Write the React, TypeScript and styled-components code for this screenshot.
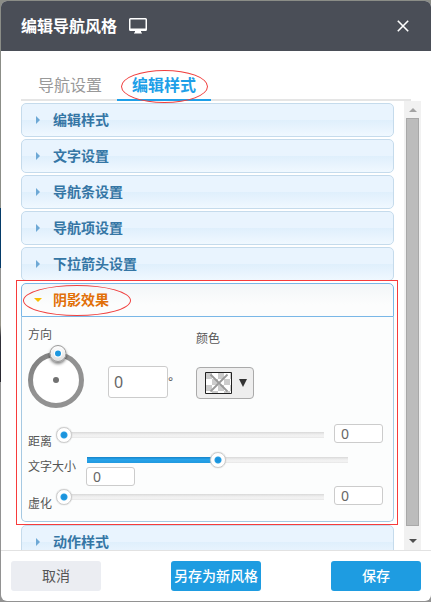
import React, { useState } from "react";
import styled, { createGlobalStyle } from "styled-components";

const GlobalStyle = createGlobalStyle`
  *, *::before, *::after { box-sizing: border-box; }
  body {
    margin: 0;
    font-family: "Noto Sans", "Noto Sans CJK SC", sans-serif;
    font-size: 12px;
    color: #666;
  }
  button, input { font-family: inherit; }
`;

const Backdrop = styled.div`
  height: 100vh;
  padding: 1px 0 1px 1px;
  background: linear-gradient(
    to bottom,
    #8b8d87 0 34.5%,
    #053b69 34.5% 44.5%,
    #929292 44.5%,
    #969488 54%,
    #33323a 56%,
    #28272f 63.5%,
    #929292 63.5%
  );
`;

const Dialog = styled.section`
  display: flex;
  flex-direction: column;
  height: 100%;
  overflow: hidden;
  background: #fff;
  border-radius: 6px;
`;

const TitleBar = styled.header`
  display: flex;
  align-items: center;
  gap: 12px;
  height: 50px;
  flex: none;
  padding: 0 16px 0 20px;
  background: #4a4e57;
  color: #fff;
`;

const Title = styled.h1`
  margin: 0;
  font-size: 16px;
  line-height: 24px;
  font-weight: 700;
`;

const CloseButton = styled.button`
  display: flex;
  align-items: center;
  justify-content: center;
  width: 24px;
  height: 24px;
  margin-left: auto;
  padding: 0;
  border: 0;
  background: none;
  color: #fff;
  cursor: pointer;
`;

const TabList = styled.div`
  display: flex;
  flex: none;
  height: 50px;
  margin: 0 20px;
  padding-left: 2px;
  box-shadow: inset 0 -2px #e5e5e5;
`;

const Tab = styled.button<{ $active?: boolean }>`
  position: relative;
  padding: 20px 15px 0;
  border: 0;
  border-bottom: 2px solid ${(p) => (p.$active ? "#1e9fe8" : "transparent")};
  background: none;
  color: ${(p) => (p.$active ? "#1e9fe8" : "#999")};
  font-size: 16px;
  line-height: 24px;
  font-weight: ${(p) => (p.$active ? 700 : 400)};
  cursor: pointer;
`;

const TabMark = styled.span`
  position: absolute;
  inset: 19px 3px -4px 4px;
  border: 1px solid #f0403f;
  border-radius: 50%;
`;

const ScrollArea = styled.div`
  display: flex;
  flex: 1;
  gap: 10px;
  min-height: 0;
  padding: 0 10px 0 20px;
`;

const Viewport = styled.div`
  flex: 1;
  min-width: 0;
  padding: 2px 4px 0 5px;
  margin: 0 -4px 0 -5px;
  overflow: hidden;
`;

const Section = styled.section`
  margin-bottom: 2px;
`;

const OpenSection = styled(Section)`
  position: relative;
  margin-bottom: 3px;
`;

const SectionMark = styled.div`
  position: absolute;
  inset: -3px -4px -3px -5px;
  border: 1px solid #f73b3b;
  pointer-events: none;
`;

const HeadingMark = styled.span`
  position: absolute;
  top: 1px;
  left: 1px;
  width: 108px;
  height: 31px;
  border: 1px solid #f0403f;
  border-radius: 50%;
`;

const SectionHeading = styled.h2`
  margin: 0;
  font-size: 14px;
`;

const SectionButton = styled.button<{ $open?: boolean }>`
  position: relative;
  display: flex;
  align-items: center;
  gap: 9px;
  width: 100%;
  height: 34px;
  padding: 0 11px 0 10px;
  border: 1px solid ${(p) => (p.$open ? "#79b7e7" : "#c5dbec")};
  border-radius: ${(p) => (p.$open ? "5px 5px 0 0" : "5px")};
  background: ${(p) =>
    p.$open
      ? "linear-gradient(#f3f6f8, #fcfdfd 65%)"
      : "linear-gradient(#e9f4fe 50%, #dfeffc 50%, #f0f8ff)"};
  color: ${(p) => (p.$open ? "#e17009" : "#3576a5")};
  font-size: 14px;
  line-height: 20px;
  font-weight: 700;
  text-align: left;
  cursor: pointer;
`;

const Panel = styled.div`
  padding: 8px 10px 8px 6px;
  border: 1px solid #a6c9e2;
  border-top: 0;
  border-radius: 0 0 5px 5px;
  background: #fcfdfd;
`;

const ShadowOptions = styled.div`
  display: grid;
  grid-template-columns: 168px 1fr;
  margin-bottom: 16px;
`;

const DirectionField = styled.div`
  display: flex;
  flex-direction: column;
  gap: 7px;
`;

const ColorField = styled.div`
  display: flex;
  flex-direction: column;
  align-items: flex-start;
  gap: 18px;
  padding-top: 4px;
`;

const Label = styled.label`
  flex: none;
  font-size: 12px;
  line-height: 20px;
  color: #555;
`;

const DialRow = styled.div`
  display: flex;
  gap: 24px;
`;

const DegreeGroup = styled.div`
  display: flex;
  padding-top: 14px;
  line-height: 32px;
`;

const NumberInput = styled.input<{ $large?: boolean }>`
  flex: none;
  width: ${(p) => (p.$large ? 60 : 49)}px;
  height: ${(p) => (p.$large ? 32 : 19)}px;
  padding: 0 ${(p) => (p.$large ? 5 : 6)}px;
  border: 1px solid #ccc;
  border-radius: 3px;
  background: #fff;
  color: #666;
  font-size: ${(p) => (p.$large ? 16 : 14)}px;
`;

const DialDrawing = styled.svg`
  display: block;
  overflow: visible;
`;

const ColorButton = styled.button`
  display: flex;
  align-items: center;
  gap: 7px;
  width: 58px;
  height: 32px;
  padding: 0 6px 0 8px;
  border: 1px solid #aaa;
  border-radius: 4px;
  background: #eee;
  cursor: pointer;
`;

const SliderRow = styled.div`
  display: flex;
  align-items: flex-start;
  gap: 4px;

  & > ${Label} { padding-top: 8px; margin-bottom: -1px; }
`;

const SliderBox = styled.div`
  display: flex;
  flex: 1;
  min-width: 0;
  gap: 2px;
`;

const SizeRow = styled.div`
  display: flex;
  gap: 3px;
  height: 35px;

  & > ${Label} { padding-top: 6px; }
`;

const SizeBox = styled.div`
  display: flex;
  flex: 1;
  flex-direction: column;
  min-width: 0;
  padding: 2px 27px 0 0;

  & > ${NumberInput} { margin-left: 7px; }
`;

const Range = styled.input<{ $spaced?: boolean }>`
  appearance: none;
  display: block;
  flex: 1 0 14px;
  min-width: 0;
  height: 14px;
  margin: ${(p) => (p.$spaced ? "4px" : "0")} 0 0;
  background:
    linear-gradient(#1683c8, #27a3ea 40%, #2199df) 8px center / calc((100% - 16px) * var(--fill)) 6px no-repeat,
    linear-gradient(#d8d8d8, #ececec 35%, #f4f4f4 70%, #e6e6e6) center / calc(100% - 16px) 6px no-repeat;
  cursor: pointer;

  &::-webkit-slider-thumb {
    appearance: none;
    width: 16px;
    height: 16px;
    border: 1px solid #ccc;
    border-radius: 50%;
    background: radial-gradient(circle, #1c93dc 0 2px, #259fe5 3px, #fff 4px);
    box-shadow: 0 0 1px #aaa;
  }
`;

const ScrollBar = styled.div`
  display: flex;
  flex-direction: column;
  align-items: center;
  flex: none;
  width: 17px;
  background: #f1f1f1;
`;

const ScrollThumb = styled.div`
  flex: 1;
  width: 13px;
  border: 1px solid #a8a8a8;
  background: #bcbcbc;
`;

const ScrollStep = styled.button<{ $tall?: boolean }>`
  display: flex;
  align-items: center;
  justify-content: center;
  width: 17px;
  height: ${(p) => (p.$tall ? 24 : 17)}px;
  padding: ${(p) => (p.$tall ? "5px 0 0" : "0")};
  border: 0;
  background: none;
`;

const Footer = styled.footer`
  display: grid;
  grid-template-columns: 1fr auto 1fr;
  flex: none;
  padding: 10px;
  border-top: 1px solid #e2e2e2;
`;

const ActionButton = styled.button<{ $primary?: boolean; $end?: boolean }>`
  justify-self: ${(p) => (p.$end ? "end" : "start")};
  width: 90px;
  height: 30px;
  padding: 0;
  border: 0;
  border-radius: 3px;
  background: ${(p) => (p.$primary ? "#1e9ce1" : "#ebedf2")};
  color: ${(p) => (p.$primary ? "#fff" : "#555")};
  font-size: 14px;
  line-height: 20px;
  font-weight: ${(p) => (p.$primary ? 500 : 400)};
  white-space: nowrap;
  cursor: pointer;
`;

function MonitorIcon() {
  return (
    <svg width="18" height="16" viewBox="0 0 18 16" aria-hidden="true">
      <path
        fill="#fff"
        fillRule="evenodd"
        d="M1.500 0h15A1.500 1.500 0 0 1 18 1.500v10a1.500 1.500 0 0 1-1.500 1.500H12v1l1 1v.500H5V15l1-1v-1H1.500A1.500 1.500 0 0 1 0 11.500v-10A1.500 1.500 0 0 1 1.500 0zM1.500 1.500v9h15v-9z"
      />
    </svg>
  );
}

function SectionArrow({ open }: { open?: boolean }) {
  return (
    <svg width="12" height="10" viewBox="0 0 12 10" aria-hidden="true">
      {open ? <path d="M2 3h8L6 7z" fill="#f9bd01" /> : <path d="M4 1v8l4-4z" fill="#6da8d5" />}
    </svg>
  );
}

function Dial() {
  return (
    <DialDrawing width="56" height="56" viewBox="0 0 56 56" role="img" aria-label="方向">
      <defs>
        <linearGradient id="ring" x1="0" y1="0" x2="1" y2="1">
          <stop offset="0" stopColor="#7c7c7c" />
          <stop offset="0.4" stopColor="#929292" />
        </linearGradient>
        <linearGradient id="knob" x1="0" y1="0" x2="0" y2="1">
          <stop offset="0" stopColor="#fff" />
          <stop offset="1" stopColor="#ddd" />
        </linearGradient>
        <filter id="shade" x="-50%" y="-50%" width="200%" height="200%">
          <feDropShadow dx="0" dy="2" stdDeviation="1.5" floodColor="#000" floodOpacity="0.5" />
        </filter>
      </defs>
      <circle cx="28" cy="28" r="25.5" fill="#fff" stroke="url(#ring)" strokeWidth="5" />
      <circle cx="28" cy="28" r="3" fill="#717171" />
      <circle cx="30" cy="1.5" r="8" fill="url(#knob)" stroke="#999" filter="url(#shade)" />
      <circle cx="30" cy="1.5" r="4" fill="#fff" />
      <circle cx="30" cy="1.5" r="3" fill="#1d98e0" />
    </DialDrawing>
  );
}

function EmptySwatch() {
  return (
    <svg width="27" height="22" viewBox="0 0 27 22" aria-hidden="true">
      <defs>
        <pattern id="checks" width="12" height="12" x="1" y="1" patternUnits="userSpaceOnUse">
          <path d="M0 0h12v12H0z" fill="#fff" />
          <path d="M0 0h6v6H0zM6 6h6v6H6z" fill="#ccc" />
        </pattern>
      </defs>
      <path d="M.5.5h26v21H.5z" fill="url(#checks)" stroke="#222" />
      <path d="M5.5 2.500l17 17M22.500 2.500l-17 17" stroke="#999" strokeWidth="1.8" />
    </svg>
  );
}

function Slider({ id, name, value, onChange, spaced }: {
  id: string;
  name: string;
  value: number;
  onChange: (v: number) => void;
  spaced?: boolean;
}) {
  return (
    <Range
      id={id}
      aria-label={name}
      type="range"
      min={0}
      max={100}
      value={value}
      $spaced={spaced}
      style={{ "--fill": value / 100 } as React.CSSProperties}
      onChange={(e) => onChange(Number(e.target.value))}
    />
  );
}

function ValueSlider({ id, name }: { id: string; name: string }) {
  const [value, setValue] = useState(0);
  return (
    <SliderRow>
      <Label htmlFor={id}>{name}</Label>
      <SliderBox>
        <Slider id={id} name={name} value={value} onChange={setValue} spaced />
        <NumberInput
          aria-label={name}
          value={value}
          onChange={(e) => setValue(Number(e.target.value) || 0)}
        />
      </SliderBox>
    </SliderRow>
  );
}

function ClosedSection({ title }: { title: string }) {
  return (
    <Section>
      <SectionHeading>
        <SectionButton aria-expanded={false}>
          <SectionArrow />
          {title}
        </SectionButton>
      </SectionHeading>
    </Section>
  );
}

const sectionTitles = ["编辑样式", "文字设置", "导航条设置", "导航项设置", "下拉箭头设置"];

export default function App() {
  const [size, setSize] = useState(50);
  return (
    <Backdrop>
      <GlobalStyle />
      <Dialog role="dialog" aria-labelledby="dialog-title">
        <TitleBar>
          <Title id="dialog-title">编辑导航风格</Title>
          <MonitorIcon />
          <CloseButton aria-label="关闭">
            <svg width="12" height="12" viewBox="0 0 12 12" aria-hidden="true">
              <path d="M.8.8l10.400 10.400M11.200.8L.8 11.200" stroke="currentColor" strokeWidth="1.6" />
            </svg>
          </CloseButton>
        </TitleBar>
        <TabList role="tablist">
          <Tab role="tab" aria-selected={false}>导航设置</Tab>
          <Tab role="tab" aria-selected $active>
            编辑样式
            <TabMark />
          </Tab>
        </TabList>
        <ScrollArea>
          <Viewport>
            {sectionTitles.map((title) => (
              <ClosedSection key={title} title={title} />
            ))}
            <OpenSection>
              <SectionHeading>
                <SectionButton $open aria-expanded>
                  <SectionArrow open />
                  阴影效果
                  <HeadingMark />
                </SectionButton>
              </SectionHeading>
              <Panel>
                <ShadowOptions>
                  <DirectionField>
                    <Label htmlFor="direction">方向</Label>
                    <DialRow>
                      <Dial />
                      <DegreeGroup>
                        <NumberInput id="direction" $large defaultValue="0" />°
                      </DegreeGroup>
                    </DialRow>
                  </DirectionField>
                  <ColorField>
                    <Label htmlFor="color">颜色</Label>
                    <ColorButton id="color" aria-haspopup="true">
                      <EmptySwatch />
                      <svg width="8" height="9" viewBox="0 0 8 9" aria-hidden="true">
                        <path d="M0 0h8L4 8z" fill="#333" />
                      </svg>
                    </ColorButton>
                  </ColorField>
                </ShadowOptions>
                <ValueSlider id="distance" name="距离" />
                <SizeRow>
                  <Label htmlFor="text-size">文字大小</Label>
                  <SizeBox>
                    <Slider id="text-size" name="文字大小" value={size} onChange={setSize} />
                    <NumberInput aria-label="文字大小" defaultValue="0" />
                  </SizeBox>
                </SizeRow>
                <ValueSlider id="blur" name="虚化" />
              </Panel>
              <SectionMark />
            </OpenSection>
            <ClosedSection title="动作样式" />
          </Viewport>
          <ScrollBar>
            <ScrollStep aria-label="向上滚动">
              <svg width="8" height="4" viewBox="0 0 8 4" aria-hidden="true">
                <path d="M0 4h8L4 0z" fill="#a3a3a3" />
              </svg>
            </ScrollStep>
            <ScrollThumb />
            <ScrollStep aria-label="向下滚动" $tall>
              <svg width="8" height="4" viewBox="0 0 8 4" aria-hidden="true">
                <path d="M0 0h8L4 4z" fill="#505050" />
              </svg>
            </ScrollStep>
          </ScrollBar>
        </ScrollArea>
        <Footer>
          <ActionButton>取消</ActionButton>
          <ActionButton $primary>另存为新风格</ActionButton>
          <ActionButton $primary $end>保存</ActionButton>
        </Footer>
      </Dialog>
    </Backdrop>
  );
}
